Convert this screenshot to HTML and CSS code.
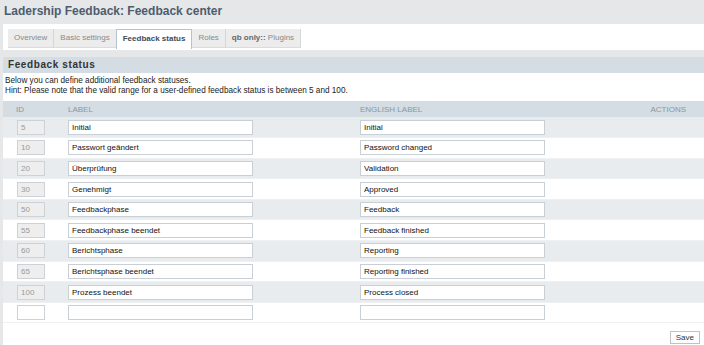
FILE: index.html
```html
<!DOCTYPE html>
<html lang="en">

<head>
    <meta charset="UTF-8">
    <meta name="viewport" content="width=device-width, initial-scale=1.0">
    <title>Feedback center</title>
    <link rel="stylesheet" href="styles.css">
</head>

<body>
    <h1 class="page-title">Ladership Feedback: Feedback center</h1>

    <div class="tab-bar">
        <ul class="tabs">
            <li>Overview</li>
            <li>Basic settings</li>
            <li class="active">Feedback status</li>
            <li>Roles</li>
            <li><b>qb only::</b> Plugins</li>
        </ul>
    </div>

    <div class="panel">
        <h2 class="panel-head">Feedback status</h2>
        <p class="intro">
            Below you can define additional feedback statuses.<br>
            Hint: Please note that the valid range for a user-defined feedback status is between 5 and 100.
        </p>

        <table class="status-table">
            <thead>
                <tr>
                    <th class="col-id">ID</th>
                    <th class="col-label">LABEL</th>
                    <th class="col-english">ENGLISH LABEL</th>
                    <th class="col-actions">ACTIONS</th>
                </tr>
            </thead>
            <tbody>
                <tr>
                    <td><input class="id-input" type="text" value="5" disabled></td>
                    <td><input class="text-input" type="text" value="Initial"></td>
                    <td><input class="text-input" type="text" value="Initial"></td>
                    <td></td>
                </tr>
                <tr>
                    <td><input class="id-input" type="text" value="10" disabled></td>
                    <td><input class="text-input" type="text" value="Passwort geändert"></td>
                    <td><input class="text-input" type="text" value="Password changed"></td>
                    <td></td>
                </tr>
                <tr>
                    <td><input class="id-input" type="text" value="20" disabled></td>
                    <td><input class="text-input" type="text" value="Überprüfung"></td>
                    <td><input class="text-input" type="text" value="Validation"></td>
                    <td></td>
                </tr>
                <tr>
                    <td><input class="id-input" type="text" value="30" disabled></td>
                    <td><input class="text-input" type="text" value="Genehmigt"></td>
                    <td><input class="text-input" type="text" value="Approved"></td>
                    <td></td>
                </tr>
                <tr>
                    <td><input class="id-input" type="text" value="50" disabled></td>
                    <td><input class="text-input" type="text" value="Feedbackphase"></td>
                    <td><input class="text-input" type="text" value="Feedback"></td>
                    <td></td>
                </tr>
                <tr>
                    <td><input class="id-input" type="text" value="55" disabled></td>
                    <td><input class="text-input" type="text" value="Feedbackphase beendet"></td>
                    <td><input class="text-input" type="text" value="Feedback finished"></td>
                    <td></td>
                </tr>
                <tr>
                    <td><input class="id-input" type="text" value="60" disabled></td>
                    <td><input class="text-input" type="text" value="Berichtsphase"></td>
                    <td><input class="text-input" type="text" value="Reporting"></td>
                    <td></td>
                </tr>
                <tr>
                    <td><input class="id-input" type="text" value="65" disabled></td>
                    <td><input class="text-input" type="text" value="Berichtsphase beendet"></td>
                    <td><input class="text-input" type="text" value="Reporting finished"></td>
                    <td></td>
                </tr>
                <tr>
                    <td><input class="id-input" type="text" value="100" disabled></td>
                    <td><input class="text-input" type="text" value="Prozess beendet"></td>
                    <td><input class="text-input" type="text" value="Process closed"></td>
                    <td></td>
                </tr>
                <tr class="new-row">
                    <td><input class="id-input new" type="text" value=""></td>
                    <td><input class="text-input" type="text" value=""></td>
                    <td><input class="text-input" type="text" value=""></td>
                    <td></td>
                </tr>
            </tbody>
        </table>

        <div class="form-actions">
            <button class="save-btn">Save</button>
        </div>
    </div>
</body>

</html>
```

FILE: styles.css
```css
body {
    margin: 0;
    background-color: #e6e7e9;
    font-family: "Liberation Sans", Arial, sans-serif;
    font-size: 8px;
    color: #222;
}

.page-title {
    margin: 0;
    height: 24px;
    padding: 0 4px;
    line-height: 23px;
    font-size: 12px;
    font-weight: bold;
    color: #4d5d6d;
}

.tab-bar {
    margin-left: 3px;
    height: 26px;
    padding-top: 5px;
    box-sizing: border-box;
    background-color: #fff;
}

.tabs {
    list-style: none;
    margin: 0;
    padding: 0 0 0 5px;
    display: flex;
}

.tabs li {
    height: 18px;
    line-height: 18px;
    padding: 0 6px;
    font-size: 8px;
    color: #8a8a8a;
    background-color: #ececec;
    border-right: 1px solid #d6d6d6;
    border-bottom: 1px solid #dcdcdc;
}

.tabs li b {
    color: #666;
}

.tabs li.active {
    height: 19px;
    background-color: #fff;
    color: #3c4c5c;
    font-weight: bold;
    border: 1px solid #b3c3cf;
    border-bottom: none;
    margin-left: -1px;
}

.panel {
    margin-top: 7px;
    margin-left: 3px;
    background-color: #fff;
    height: 300px;
}

.panel-head {
    margin: 0;
    height: 16px;
    line-height: 16px;
    padding: 0 5px;
    background-color: #d3dde3;
    font-size: 10px;
    letter-spacing: 0.6px;
    color: #333;
}

.intro {
    margin: 0;
    padding: 3px 2px 5px;
    line-height: 10px;
    font-size: 8.2px;
    color: #222;
}

.status-table {
    width: 100%;
    border-collapse: collapse;
}

.status-table th {
    height: 16px;
    padding: 0;
    background-color: #d3dde3;
    text-align: left;
    font-weight: normal;
    font-size: 8px;
    color: #8c979f;
}

.status-table .col-id {
    width: 52px;
    padding-left: 13px;
}

.status-table .col-label {
    width: 292px;
}

.status-table .col-actions {
    text-align: right;
    padding-right: 18px;
}

.status-table td {
    height: 20.6px;
    padding: 0;
    border-bottom: 1px solid #eef0f2;
    box-sizing: border-box;
}

.status-table tbody tr:nth-child(odd) td {
    background-color: #e9ecef;
}

.status-table tbody tr:nth-child(even) td {
    background-color: #fff;
}

.status-table td:first-child {
    padding-left: 14px;
}

input {
    display: block;
    box-sizing: border-box;
    height: 15px;
    padding: 0 3px;
    border: 1px solid #c9d0d5;
    font-family: "Liberation Sans", Arial, sans-serif;
    font-size: 8px;
    color: #111;
    background-color: #fff;
}

.id-input {
    width: 28px;
    background-color: #eeeeee;
    color: #999;
    border-color: #cdd2d6;
}

.id-input.new {
    background-color: #fff;
}

.text-input {
    width: 185px;
}

.form-actions {
    display: flex;
    justify-content: flex-end;
    padding: 8px 4px 0 0;
}

.save-btn {
    height: 13px;
    padding: 0 5px;
    border: 1px solid #c2c2c2;
    background-color: #fff;
    font-family: "Liberation Sans", Arial, sans-serif;
    font-size: 8px;
    color: #333;
}
```
